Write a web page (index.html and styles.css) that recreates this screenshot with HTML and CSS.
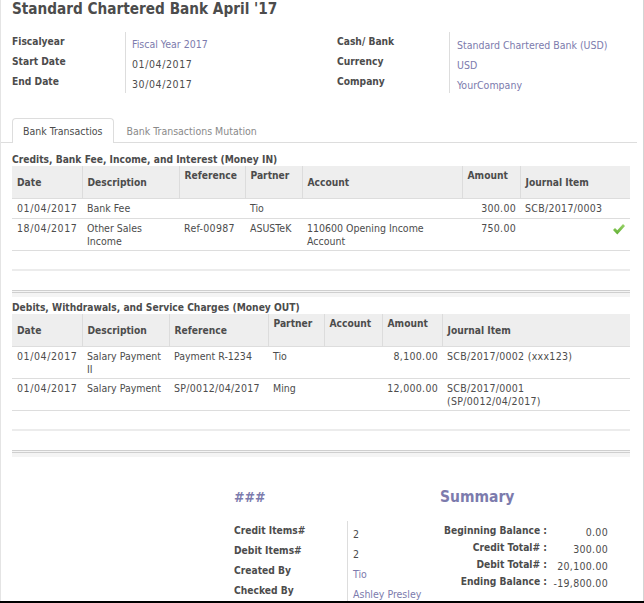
FILE: index.html
```html
<!DOCTYPE html>
<html>
<head>
<meta charset="utf-8">
<link rel="stylesheet" href="styles.css">
</head>
<body>
<div class="page">
  <h1 class="title">Standard Chartered Bank April '17</h1>

  <div class="groups">
    <div class="group g-left">
      <div class="labels"><div>Fiscalyear</div><div>Start Date</div><div>End Date</div></div>
      <div class="values">
        <div><a class="link">Fiscal Year 2017</a></div>
        <div class="date">01/04/2017</div>
        <div class="date">30/04/2017</div>
      </div>
    </div>
    <div class="group g-right">
      <div class="labels"><div>Cash/ Bank</div><div>Currency</div><div>Company</div></div>
      <div class="values">
        <div><a class="link">Standard Chartered Bank (USD)</a></div>
        <div><a class="link">USD</a></div>
        <div><a class="link">YourCompany</a></div>
      </div>
    </div>
  </div>

  <div class="tabs">
    <div class="tab active">Bank Transactios</div>
    <div class="tab">Bank Transactions Mutation</div>
  </div>

  <div class="section s-in">
    <div class="sec-title">Credits, Bank Fee, Income, and Interest (Money IN)</div>
    <table class="list t-in">
      <colgroup>
        <col class="a1"><col class="a2"><col class="a3"><col class="a4"><col class="a5"><col class="a6"><col class="a7">
      </colgroup>
      <thead>
        <tr>
          <th class="mid">Date</th>
          <th class="mid">Description</th>
          <th class="top">Reference</th>
          <th class="top">Partner</th>
          <th class="mid">Account</th>
          <th class="top">Amount</th>
          <th class="mid">Journal Item</th>
        </tr>
      </thead>
      <tbody>
        <tr class="r1">
          <td class="date">01/04/2017</td><td>Bank Fee</td><td></td><td>Tio</td><td></td>
          <td class="amt num">300.00</td><td class="num">SCB/2017/0003</td>
        </tr>
        <tr>
          <td class="date">18/04/2017</td><td>Other Sales<br>Income</td><td class="num">Ref-00987</td><td>ASUSTeK</td>
          <td>110600 Opening Income<br>Account</td><td class="amt num">750.00</td>
          <td class="chk"><svg class="check" width="12" height="11" viewBox="0 0 12 11"><defs><linearGradient id="g" x1="0" y1="0" x2="0" y2="1"><stop offset="0" stop-color="#9bd46a"/><stop offset="1" stop-color="#5fae32"/></linearGradient></defs><polygon points="0,6 2,4 4.3,6.3 10,0 12,2 4.3,10.5" fill="url(#g)"/></svg></td>
        </tr>
        <tr class="empty"><td colspan="7"></td></tr>
        <tr class="empty2"><td colspan="7"></td></tr>
      </tbody>
      <tfoot><tr><td colspan="7"></td></tr></tfoot>
    </table>
  </div>

  <div class="section s-out">
    <div class="sec-title">Debits, Withdrawals, and Service Charges (Money OUT)</div>
    <table class="list t-out">
      <colgroup>
        <col class="b1"><col class="b2"><col class="b3"><col class="b4"><col class="b5"><col class="b6"><col class="b7">
      </colgroup>
      <thead>
        <tr>
          <th class="mid">Date</th>
          <th class="mid">Description</th>
          <th class="mid">Reference</th>
          <th class="top">Partner</th>
          <th class="top">Account</th>
          <th class="top">Amount</th>
          <th class="mid">Journal Item</th>
        </tr>
      </thead>
      <tbody>
        <tr>
          <td class="date">01/04/2017</td><td>Salary Payment<br>II</td><td>Payment R-1234</td><td>Tio</td><td></td>
          <td class="amt num">8,100.00</td><td class="num">SCB/2017/0002 (xxx123)</td>
        </tr>
        <tr>
          <td class="date">01/04/2017</td><td>Salary Payment</td><td class="num">SP/0012/04/2017</td><td>Ming</td><td></td>
          <td class="amt num">12,000.00</td><td class="num">SCB/2017/0001<br>(SP/0012/04/2017)</td>
        </tr>
        <tr class="empty"><td colspan="7"></td></tr>
        <tr class="empty2"><td colspan="7"></td></tr>
      </tbody>
      <tfoot><tr><td colspan="7"></td></tr></tfoot>
    </table>
  </div>

  <div class="summary">
    <div class="sum-left">
      <div class="sum-h h-hash">###</div>
      <div class="sgroup">
        <div class="slabels"><div>Credit Items#</div><div>Debit Items#</div><div>Created By</div><div>Checked By</div></div>
        <div class="svalues">
          <div class="num">2</div>
          <div class="num">2</div>
          <div><a class="link">Tio</a></div>
          <div><a class="link">Ashley Presley</a></div>
        </div>
      </div>
    </div>
    <div class="sum-right">
      <div class="sum-h h-sum">Summary</div>
      <div class="bal">
        <div class="bl">Beginning Balance :</div><div class="bv num">0.00</div>
        <div class="bl">Credit Total# :</div><div class="bv num">300.00</div>
        <div class="bl">Debit Total# :</div><div class="bv num">20,100.00</div>
        <div class="bl">Ending Balance :</div><div class="bv num">-19,800.00</div>
      </div>
    </div>
  </div>
</div>
</body>
</html>
```

FILE: styles.css
```css
* { box-sizing: border-box; }

html { background: #000; }

body {
  margin: 0;
  width: 644px;
  height: 603px;
  font-family: "DejaVu Sans Condensed", "DejaVu Sans", sans-serif;
  font-stretch: condensed;
  font-size: 10.5px;
  color: #4c4c4c;
  overflow: hidden;
}

.page {
  background: #fff;
  height: 601px;
  overflow: hidden;
  border-left: 1px solid #e4e4e4;
  border-right: 1px solid #d4d4d4;
  padding-left: 11px;
}

.num { letter-spacing: 0.3px; }
.date { letter-spacing: 0.6px; }

.link { color: #7c7bad; text-decoration: none; }

.title {
  margin: 0;
  font-size: 15.2px;
  line-height: 18px;
  font-weight: bold;
  color: #4c4c4c;
}

/* header groups */
.groups { display: flex; margin-top: 14px; }
.group { display: flex; }
.g-left { width: 325px; }
.labels { width: 113px; font-weight: bold; font-size: 10.2px; }
.g-right .labels { width: 112px; }
.labels div { height: 20px; line-height: 20px; }
.values {
  height: 61px;
  border-left: 1px solid #ddd;
  padding: 2px 0 0 6px;
}
.g-right .values { padding: 3px 0 0 7px; }
.values div { height: 20px; line-height: 20px; }

/* tabs */
.tabs {
  display: flex;
  margin: 25px 0 0 -11px;
  padding-left: 11px;
  width: 636px;
  height: 25px;
  border-bottom: 1px solid #ddd;
}
.tab {
  height: 24px;
  padding: 2px 12px 0;
  line-height: 21px;
  color: #8a8a8a;
  border: 1px solid transparent;
  border-bottom: 0;
}
.tab.active {
  height: 25px;
  padding: 2px 10px 0;
  color: #4c4c4c;
  background: #fff;
  border-color: #ddd;
  border-radius: 4px 4px 0 0;
}

/* sections / lists */
.sec-title {
  font-weight: bold;
  font-size: 10.2px;
  line-height: 13px;
  margin-top: 10px;
}
.s-out .sec-title { margin-top: 4px; }

.list {
  width: 618px;
  border-collapse: collapse;
  table-layout: fixed;
}
.a1 { width: 70px; } .a2 { width: 97px; } .a3 { width: 66px; } .a4 { width: 57px; }
.a5 { width: 160px; } .a6 { width: 58px; } .a7 { width: 110px; }
.b1 { width: 70px; } .b2 { width: 87px; } .b3 { width: 99px; } .b4 { width: 56px; }
.b5 { width: 58px; } .b6 { width: 60px; } .b7 { width: 188px; }

.list th {
  background: #eee;
  height: 32px;
  padding: 0 4px 0 5px;
  text-align: left;
  font-weight: bold;
  font-size: 10.2px;
  line-height: 13px;
  border-left: 1px solid #dcdcdc;
  white-space: nowrap;
}
.list th:first-child { border-left: 0; }
.list th.mid { vertical-align: middle; padding-top: 2px; }
.list th.top { vertical-align: top; padding-top: 3px; }

.list td {
  padding: 3px 4px 2px 5px;
  line-height: 13px;
  border-top: 1px solid #ddd;
  vertical-align: top;
  white-space: nowrap;
}
.list tr.r1 td { height: 20px; }
.list td.amt { text-align: right; }
.list td.chk { text-align: right; padding-right: 5px; }
.check { display: inline-block; vertical-align: top; margin-top: 2px; }

.list tr.empty td { height: 20px; padding: 0; }
.list tr.empty2 td { height: 21px; padding: 0; border-top: 2px solid #ececec; }
.list tfoot td {
  height: 6px;
  padding: 0;
  border-top: 3px double #cfcfcf;
  background: #f4f4f4;
}

/* summary */
.summary {
  display: flex;
  margin-top: 31px;
  padding-left: 222px;
}
.sum-left { width: 206px; }
.sum-h {
  font-weight: bold;
  color: #7c7bad;
  line-height: 18px;
}
.h-hash { font-size: 14px; }
.h-sum { font-size: 15.5px; }

.sgroup { display: flex; margin-top: 15px; }
.slabels { width: 113px; font-weight: bold; font-size: 10.2px; }
.slabels div { height: 20px; line-height: 20px; }
.svalues {
  border-left: 1px solid #ddd;
  padding: 3px 0 0 5px;
  height: 90px;
}
.svalues div { height: 20px; line-height: 20px; }

.bal {
  display: grid;
  grid-template-columns: 107px 61px;
  margin-top: 16px;
}
.bl, .bv { height: 17px; line-height: 17px; text-align: right; }
.bl { font-weight: bold; font-size: 10.2px; }
.bv { padding-top: 2px; }
```
